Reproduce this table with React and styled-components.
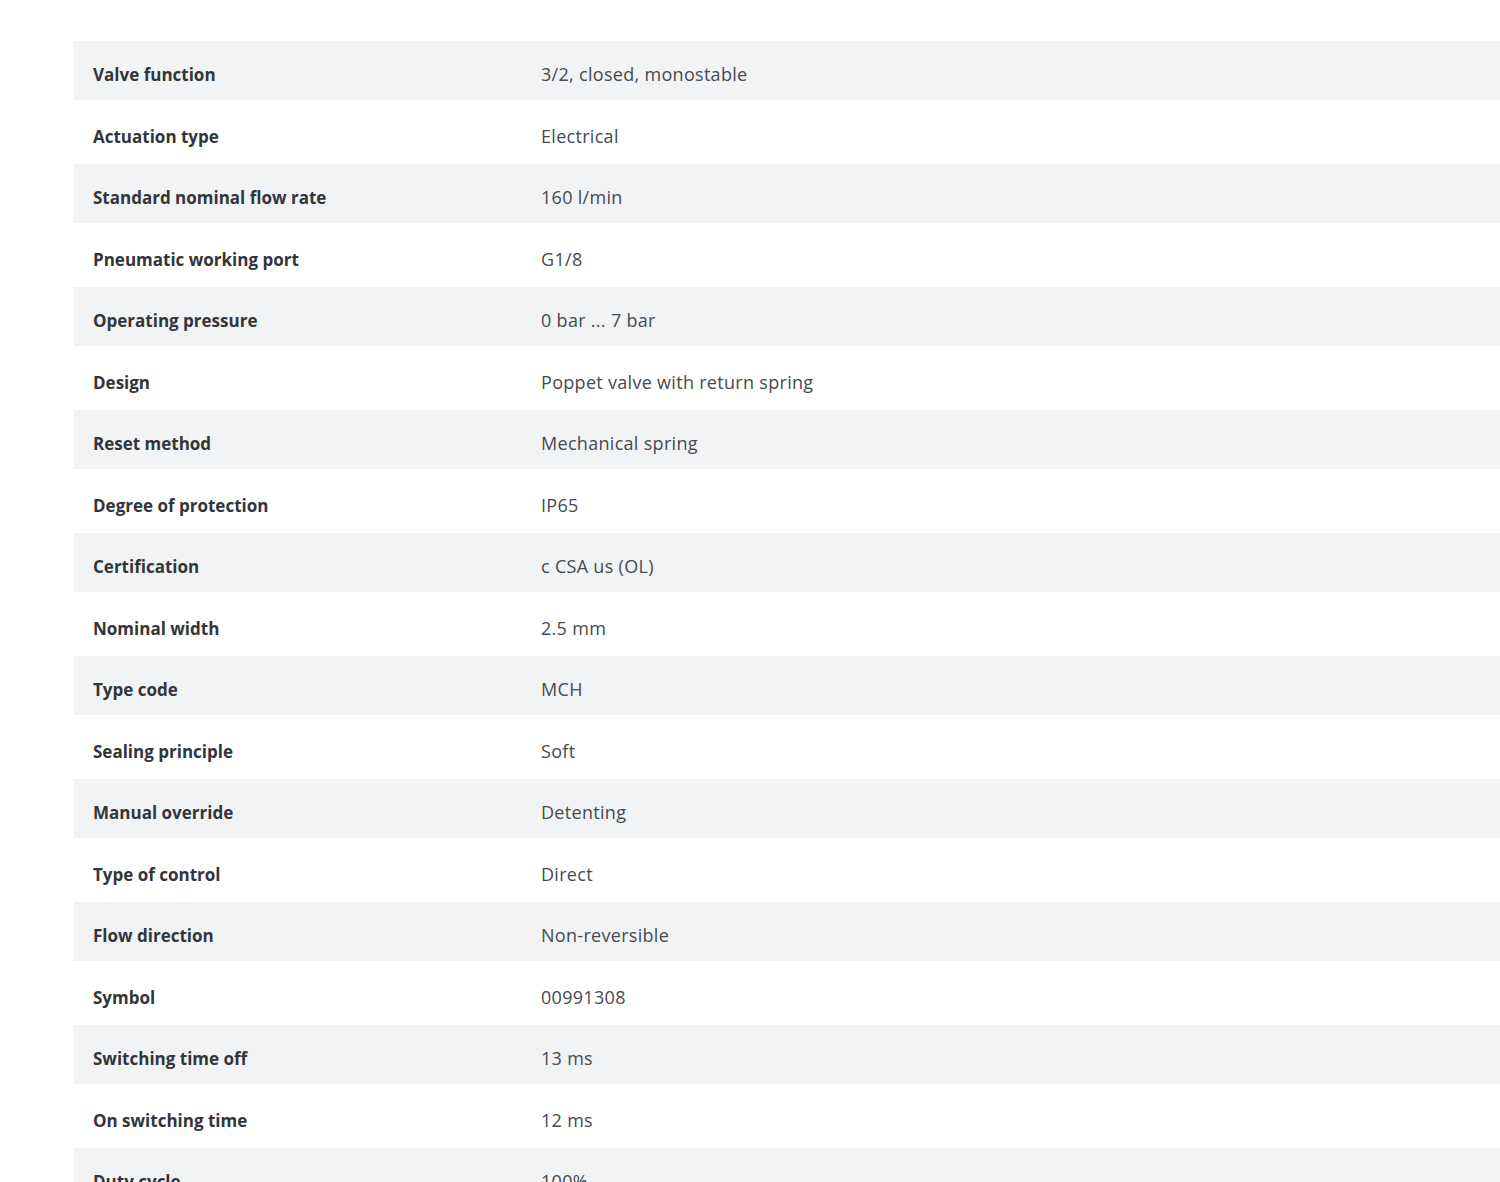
import React from "react";
import styled, { createGlobalStyle } from "styled-components";

const GlobalStyle = createGlobalStyle`
  html, body {
    margin: 0;
    padding: 0;
    background: #ffffff;
  }
  body {
    font-family: "Open Sans", "Noto Sans", sans-serif;
    overflow: hidden;
  }
`;

const specs = [
  ["Valve function", "3/2, closed, monostable"],
  ["Actuation type", "Electrical"],
  ["Standard nominal flow rate", "160 l/min"],
  ["Pneumatic working port", "G1/8"],
  ["Operating pressure", "0 bar ... 7 bar"],
  ["Design", "Poppet valve with return spring"],
  ["Reset method", "Mechanical spring"],
  ["Degree of protection", "IP65"],
  ["Certification", "c CSA us (OL)"],
  ["Nominal width", "2.5 mm"],
  ["Type code", "MCH"],
  ["Sealing principle", "Soft"],
  ["Manual override", "Detenting"],
  ["Type of control", "Direct"],
  ["Flow direction", "Non-reversible"],
  ["Symbol", "00991308"],
  ["Switching time off", "13 ms"],
  ["On switching time", "12 ms"],
  ["Duty cycle", "100%"],
];

const Page = styled.div`
  padding: 41px 0 0 74px;
  height: 1182px;
  box-sizing: border-box;
  overflow: hidden;
`;

const Table = styled.div`
  display: flex;
  flex-direction: column;
  width: 1440px;
`;

const Row = styled.div`
  display: grid;
  grid-template-columns: 467px 1fr;
  align-items: center;
  box-sizing: border-box;
  height: ${({ $striped }) => ($striped ? "59px" : "64px")};
  padding-top: ${({ $striped }) => ($striped ? "7px" : "8px")};
  background: ${({ $striped }) => ($striped ? "#f2f3f5" : "#ffffff")};
`;

const Label = styled.div`
  padding-left: 19px;
  font-size: 17px;
  font-weight: 700;
  color: #32353a;
`;

const Value = styled.div`
  font-size: 18px;
  font-weight: 400;
  color: #464a50;
  letter-spacing: 0.3px;
`;

export default function App() {
  return (
    <Page>
      <GlobalStyle />
      <Table>
        {specs.map(([label, value], i) => (
          <Row key={label} $striped={i % 2 === 0}>
            <Label>{label}</Label>
            <Value>{value}</Value>
          </Row>
        ))}
      </Table>
    </Page>
  );
}
